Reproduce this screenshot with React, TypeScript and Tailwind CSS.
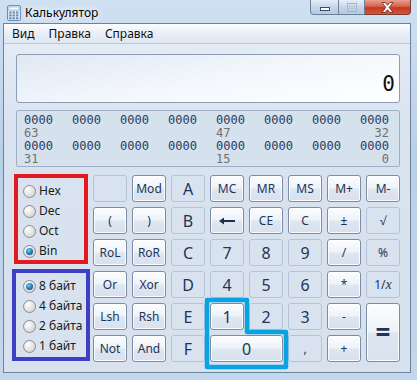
import React from "react";

type Btn = { t: React.ReactNode; on?: boolean; big?: boolean; cls?: string };

const font = "font-['Noto_Sans','Open_Sans',sans-serif]";

const rows: Btn[] = [
  { t: "" },
  { t: "Mod", on: true },
  { t: "A", big: true },
  { t: "MC", on: true },
  { t: "MR", on: true },
  { t: "MS", on: true },
  { t: "M+", on: true },
  { t: "M-", on: true },

  { t: "(", on: true },
  { t: ")", on: true },
  { t: "B", big: true },
  {
    t: (
      <svg width="18" height="8" viewBox="0 0 18 8">
        <path d="M1 4 L6 0.5 L6 3 L17 3 L17 5 L6 5 L6 7.5 Z" fill="#1c2f4f" />
      </svg>
    ),
    on: true,
  },
  { t: "CE", on: true },
  { t: "C", on: true },
  { t: "±", on: true },
  { t: "√" },

  { t: "RoL", on: true },
  { t: "RoR", on: true },
  { t: "C", big: true },
  { t: "7", big: true },
  { t: "8", big: true },
  { t: "9", big: true },
  { t: "/", on: true },
  { t: "%" },

  { t: "Or", on: true },
  { t: "Xor", on: true },
  { t: "D", big: true },
  { t: "4", big: true },
  { t: "5", big: true },
  { t: "6", big: true },
  { t: "*", on: true },
  {
    t: (
      <span>
        1/<i className="font-['Liberation_Serif',serif] text-[14px]">x</i>
      </span>
    ),
  },

  { t: "Lsh", on: true },
  { t: "Rsh", on: true },
  { t: "E", big: true },
  { t: "1", on: true, big: true },
  { t: "2", big: true },
  { t: "3", big: true },
  { t: "-", on: true },
  { t: "=", on: true, cls: "row-span-2 text-[26px] font-bold" },

  { t: "Not", on: true },
  { t: "And", on: true },
  { t: "F", big: true },
  { t: "0", on: true, big: true, cls: "col-span-2" },
  { t: "," },
  { t: "+", on: true },
];

const Radio = ({ label, on }: { label: string; on?: boolean }) => (
  <div className="flex h-[20px] items-center gap-[3px]">
    <div className="flex h-[13px] w-[13px] items-center justify-center rounded-full border border-[#8c8c8c] bg-[radial-gradient(circle_at_35%_30%,#ffffff,#dadada_70%,#c8c8c8)]">
      {on && (
        <div className="h-[7px] w-[7px] rounded-full bg-[radial-gradient(circle_at_40%_35%,#6fd0f5,#1a6cb0_60%,#0c3f7a)]" />
      )}
    </div>
    <span className="text-[12px] text-[#1a1a1a]">{label}</span>
  </div>
);

const Bits = ({ a, b, c }: { a: string; b: string; c: string }) => (
  <>
    <div className="grid grid-cols-[repeat(7,48px)_29px] text-[#283c66]">
      {Array.from({ length: 8 }).map((_, i) => (
        <span key={i}>0000</span>
      ))}
    </div>
    <div className="grid grid-cols-[repeat(7,48px)_29px] text-[#707070]">
      <span className="col-start-1">{a}</span>
      <span className="col-start-5">{b}</span>
      <span className="col-start-8 text-right">{c}</span>
    </div>
  </>
);

export default function App() {
  return (
    <div
      className={`relative flex h-[380px] w-[417px] flex-col overflow-hidden bg-[linear-gradient(to_bottom,#cfe0f2,#b9d0e9_40%,#c3d7ec)] ${font}`}
    >
      {/* title bar */}
      <div className="flex h-[23px] items-start justify-between">
        <div className="flex items-center pl-[6px] pt-[4px]">
          <svg width="16" height="16" viewBox="0 0 16 16">
            <rect x="1.5" y="0.5" width="13" height="15" rx="1.5" fill="#d9e8f6" stroke="#6e8fb4" />
            <rect x="3" y="2" width="10" height="3" fill="#f5fbff" stroke="#8aa6c6" strokeWidth="0.6" />
            {[0, 1, 2].map((r) =>
              [0, 1, 2].map((c) => (
                <rect key={r + "-" + c} x={3.2 + c * 3.4} y={6.5 + r * 2.9} width="2.4" height="2" fill="#6b8fb8" />
              ))
            )}
          </svg>
          <span className="ml-[3px] text-[12px] text-black [text-shadow:0_0_6px_#ffffff,0_0_10px_#ffffff]">
            Калькулятор
          </span>
        </div>
        <div className="mr-[6px] flex h-[15px]">
          <div className="flex w-[29px] items-center justify-center rounded-bl-[4px] border border-t-0 border-[#6c7f98] bg-[linear-gradient(to_bottom,#e6eef8,#c6d6ea_50%,#b6cae2)]">
            <div className="mt-[3px] h-[4px] w-[10px] border border-[#3b4b60] bg-white" />
          </div>
          <div className="flex w-[26px] items-center justify-center border border-l-0 border-t-0 border-[#6c7f98] bg-[linear-gradient(to_bottom,#e6eef8,#c6d6ea_50%,#b6cae2)]">
            <div className="flex h-[9px] w-[10px] items-center justify-center border border-[#a7b5c7]">
              <div className="h-[3px] w-[6px] border border-[#b8c4d3]" />
            </div>
          </div>
          <div className="flex w-[46px] items-center justify-center rounded-br-[4px] border border-l-0 border-t-0 border-[#7a3a30] bg-[linear-gradient(to_bottom,#e8a090,#d6634b_45%,#c23a20_55%,#d8553a)]">
            <svg width="13" height="11" viewBox="0 0 13 11">
              <path
                d="M1 0.5 L4 0.5 L6.5 3.3 L9 0.5 L12 0.5 L8.2 5.5 L12 10.5 L9 10.5 L6.5 7.7 L4 10.5 L1 10.5 L4.8 5.5 Z"
                fill="#ffffff"
                stroke="#5e2418"
                strokeWidth="0.8"
              />
            </svg>
          </div>
        </div>
      </div>

      {/* client */}
      <div className="mb-[7px] ml-[3px] mr-[6px] flex flex-1 flex-col border border-[#6f8299] bg-[linear-gradient(to_bottom,#e6edf6,#d9e3f0_30%,#d8e2ef)]">
        <div className="flex h-[20px] items-center gap-[14px] border-b border-[#b9c7d8] bg-[linear-gradient(to_bottom,#fbfcfe,#e9eef6_50%,#dfe7f1)] pl-[8px] text-[12px] text-[#111]">
          <span>Вид</span>
          <span>Правка</span>
          <span>Справка</span>
        </div>

        <div className="flex flex-col pl-[12px] pr-[10px] pt-[10px]">
          {/* main display */}
          <div className="flex h-[49px] items-end justify-end rounded-[3px] border border-[#8d9db4] bg-[linear-gradient(170deg,#dfe8f4,#f3f7fc_50%,#ffffff)] pb-[7px] pr-[4px]">
            <span className="font-['DejaVu_Sans_Mono',monospace] text-[21px] leading-none text-[#111]">0</span>
          </div>

          {/* bit display */}
          <div className="mt-[7px] h-[57px] rounded-[2px] border border-[#9fb0c6] bg-[#d6e1ee] pl-[7px] pt-[3px] font-['DejaVu_Sans_Mono',monospace] text-[12px] leading-[13px]">
            <Bits a="63" b="47" c="32" />
            <Bits a="31" b="15" c="0" />
          </div>

          <div className="mt-[7px] flex">
            {/* radio groups */}
            <div className="-ml-[4px] flex w-[79px] flex-col">
              <div className="mx-[2px] h-[90px] border-4 border-[#e5171f] pl-[5px] pt-[3px]">
                <Radio label="Hex" />
                <Radio label="Dec" />
                <Radio label="Oct" />
                <Radio label="Bin" on />
              </div>
              <div className="mt-[5px] h-[92px] border-4 border-[#3f3fc4] pl-[7px] pt-[3px]">
                <Radio label="8 байт" on />
                <Radio label="4 байта" />
                <Radio label="2 байта" />
                <Radio label="1 байт" />
              </div>
            </div>

            {/* keypad */}
            <div className="ml-[3px] mt-[1px] grid grid-cols-[repeat(8,34px)] auto-rows-[27px] gap-[5px]">
              {rows.map((b, i) => (
                <div
                  key={i}
                  className={
                    "flex items-center justify-center rounded-[3px] border text-[#1f3456] " +
                    (b.big ? "text-[16px] " : "text-[12px] ") +
                    (b.on
                      ? "border-[#7c8ca4] bg-[linear-gradient(to_bottom,#fbfdff_0%,#eef3f9_48%,#dee6f1_52%,#d8e1ee_100%)] shadow-[inset_0_0_0_1px_rgba(255,255,255,0.85)] "
                      : "border-[#b6c3d4] bg-[#d9e3f0] ") +
                    (b.cls ?? "")
                  }
                >
                  {b.t}
                </div>
              ))}
            </div>
          </div>
        </div>
      </div>

      {/* highlight around 1 and 0 */}
      <svg className="pointer-events-none absolute left-0 top-0" width="417" height="380">
        <path
          d="M207 300 L247 300 L247 332 L286 332 L286 367 L207 367 Z"
          fill="none"
          stroke="#0aa3e2"
          strokeWidth="4.5"
          strokeLinejoin="round"
        />
      </svg>
    </div>
  );
}
